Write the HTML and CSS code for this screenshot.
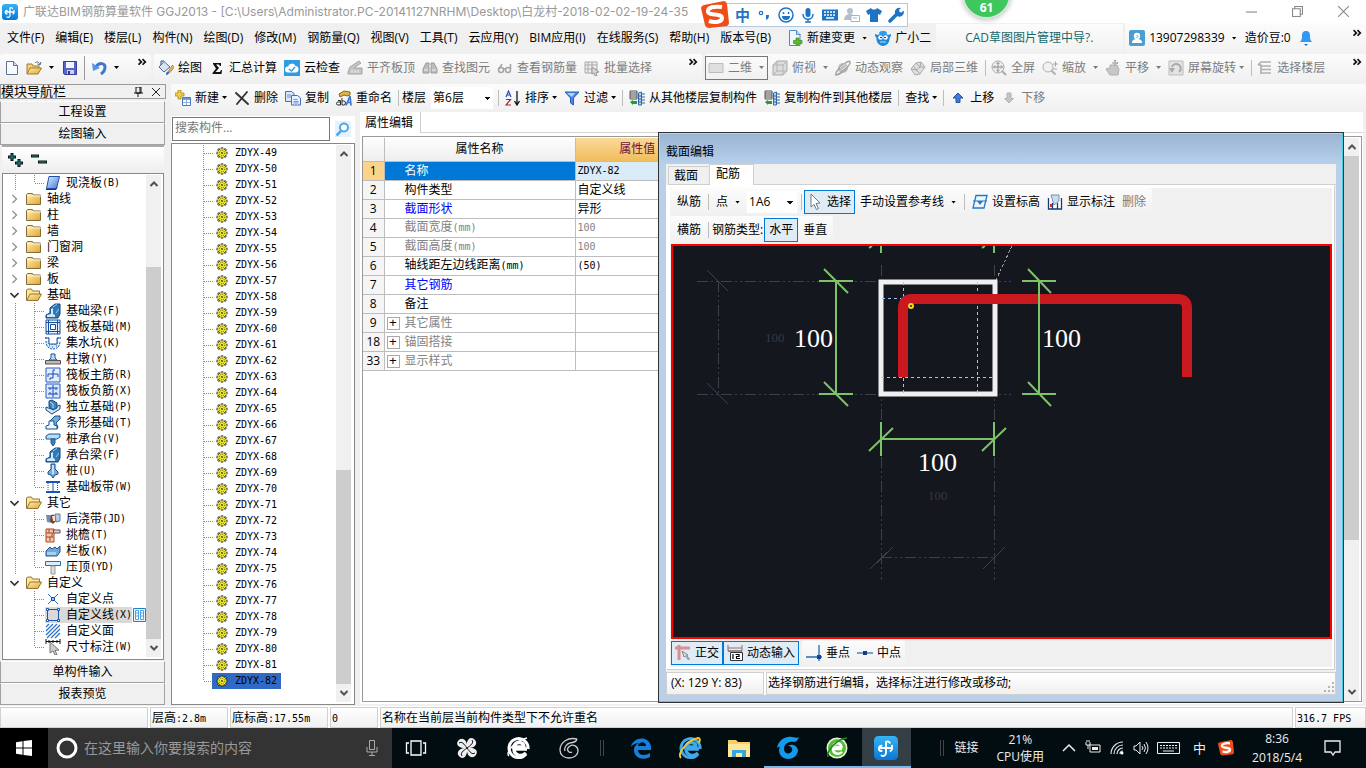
FILE: index.html
```html
<!DOCTYPE html>
<html lang="zh-CN">
<head>
<meta charset="utf-8">
<title>广联达BIM钢筋算量软件 GGJ2013</title>
<link rel="stylesheet" href="styles.css">
</head>
<body>
<svg class="defs" aria-hidden="true">
<defs>
<linearGradient id="gold" x1="0" y1="0" x2="1" y2="1"><stop offset="0" stop-color="#fff0b0"/><stop offset="1" stop-color="#e0a52c"/></linearGradient>
<linearGradient id="blue" x1="0" y1="0" x2="1" y2="1"><stop offset="0" stop-color="#e3eeff"/><stop offset="1" stop-color="#3b78d8"/></linearGradient>
<linearGradient id="sky" x1="0" y1="0" x2="0" y2="1"><stop offset="0" stop-color="#35b4f5"/><stop offset="1" stop-color="#0a78d6"/></linearGradient>
</defs>
<symbol id="logo" viewBox="0 0 16 16"><rect width="16" height="16" rx="3" fill="url(#sky)"/><path d="M10.500 4.500A1.600 1.600 0 0 0 8 4v7.500a2 2 0 0 1-3 1.500M12 8H4.500M5 6.500a1.500 1.500 0 0 0 0 3.500M12 6.500v2a2 2 0 0 1-1 1.500" fill="none" stroke="#fff" stroke-width="1.300" stroke-linecap="round"/></symbol>
<symbol id="new" viewBox="0 0 16 16"><path d="M2.500 1.500h7l4 4v9h-11z" fill="#f7fbff" stroke="#5b7590"/><path d="M9.500 1.500v4h4" fill="#cfe0f0" stroke="#5b7590"/></symbol>
<symbol id="open" viewBox="0 0 16 16"><path d="M1 14V4h5l1 2h6v3" fill="#f3d077" stroke="#a07a2c"/><path d="M1 14l3-6h11.500l-3.500 6z" fill="url(#gold)" stroke="#a07a2c"/><path d="M9 3c2-2 4-1 4.500 1M15 2l-1 3-2.500-1" fill="none" stroke="#456a8a"/></symbol>
<symbol id="save" viewBox="0 0 16 16"><path d="M1.500 1.500h13v13h-12l-1-1z" fill="#5764c8" stroke="#373f98"/><path d="M4 2h8v6H4z" fill="#f2f4ff"/><path d="M5 10h7v4H5z" fill="#c9cff0"/><path d="M6 11h2v3H6z" fill="#30378a"/></symbol>
<symbol id="undo" viewBox="0 0 16 16"><path d="M5 7c3-5 9-4 9 0 0 3-1 5-4 7" fill="none" stroke="#3f76cd" stroke-width="3"/><path d="M1 3l1 8 7-3z" fill="#5a92e4"/></symbol>
<symbol id="draw" viewBox="0 0 16 16"><path d="M6 1.500L12 7l-6 5-5-5z" fill="#d8e4f4" stroke="#496a92"/><path d="M3 5V1l3 0" stroke="#2d4f7a" fill="none"/><path d="M14.500 5l-4 6 1.500 1.500 4-5z" fill="#e4b64a" stroke="#8a6a24" stroke-width=".6"/><path d="M8 15c0-3 1-4 3-3.500 1 1.500-1 3.500-3 3.500z" fill="#3c6db4"/></symbol>
<symbol id="sigma" viewBox="0 0 16 16"><path d="M4 3h8v3h-1l-1-1.500H7L10 8l-3.500 4H11l1-2h1l-.5 4h-9v-1L7 8.500 4 4z" fill="#111"/></symbol>
<symbol id="cloud" viewBox="0 0 16 16"><rect width="16" height="16" fill="#2f9be0"/><path d="M4 12.500a3 3 0 0 1 0-6 4 4 0 0 1 7.500-.5 3.300 3.300 0 0 1 .5 6.500z" fill="#fff"/><path d="M5 9l2.500 2L11 7" fill="none" stroke="#2f9be0" stroke-width="1.400"/></symbol>
<symbol id="align" viewBox="0 0 16 16"><path d="M1 12l2-5 9-6 2 2-7 5h8v6H1z" fill="#c4c4c4" stroke="#a5a5a5"/><path d="M5 13v-3m3 3v-3m3 3v-3" stroke="#eee"/></symbol>
<symbol id="bino" viewBox="0 0 16 16"><path d="M2 7l2-4h3v10H1V9zM9 3h3l2 4 1 2v4H9z" fill="#bdbdbd" stroke="#9a9a9a"/><path d="M7 6h2M2 10h4M10 10h4" stroke="#eee"/></symbol>
<symbol id="glasses" viewBox="0 0 16 16"><g fill="none" stroke="#a4a4a4" stroke-width="1.500"><circle cx="4" cy="10" r="2.500"/><circle cx="11" cy="10" r="2.500"/><path d="M6 9h3M2 9l3-5M13.500 9V4"/></g></symbol>
<symbol id="batch" viewBox="0 0 16 16"><path d="M1 2h12v11H1zM1 5h12M1 9h12M4 2v11M8 2v11" fill="#eee" stroke="#a8a8a8"/><path d="M8 7l7 5-3 .5 1 3-2 .5-1-3-2 1z" fill="#d8d8d8" stroke="#999"/></symbol>
<symbol id="two" viewBox="0 0 16 16"><path d="M1 3.500h14v9H1z" fill="#dedede" stroke="#bdbdbd"/></symbol>
<symbol id="cube" viewBox="0 0 16 16"><path d="M1 5l4-4h10v10l-4 4H1z" fill="#dcdcdc" stroke="#a8a8a8"/><path d="M1 5h10v10M11 5l4-4M5 1v10h10M1 15l4-4" fill="none" stroke="#b5b5b5"/></symbol>
<symbol id="planet" viewBox="0 0 16 16"><circle cx="8" cy="8" r="5" fill="#bdbdbd"/><path d="M1 15C-1 12 14-2 15 2c1 2-8 12-14 13z" fill="none" stroke="#a2a2a2" stroke-width="1.500"/><path d="M5 8l5-4M7 10l5-4" stroke="#e8e8e8"/></symbol>
<symbol id="part" viewBox="0 0 16 16"><path d="M1 9l5-6 5-1 4 5-5 7-5 1z" fill="#e0e0e0" stroke="#aaa"/><path d="M1 9l5 1 4 4M6 3l4 4-4 3M11 2l-1 5 5 0M3 6l7 8" fill="none" stroke="#aaa"/></symbol>
<symbol id="full" viewBox="0 0 16 16"><circle cx="7" cy="7" r="6" fill="#eee" stroke="#aaa"/><path d="M11 11l4 4" stroke="#aaa" stroke-width="2"/><path d="M7 2.500v9M2.500 7h9M5.500 4L7 2.500 8.500 4M5.500 10L7 11.500 8.500 10M4 5.500L2.500 7 4 8.500M10 5.500L11.500 7 10 8.500" fill="none" stroke="#8e8e8e"/></symbol>
<symbol id="zoomi" viewBox="0 0 16 16"><circle cx="6" cy="7" r="5" fill="#f1f1f1" stroke="#b0b0b0"/><path d="M9.500 10.500l4 4" stroke="#b0b0b0" stroke-width="2"/><path d="M11 4h5M13.500 1.500v5M11 9h4" stroke="#a5a5a5"/></symbol>
<symbol id="hand" viewBox="0 0 16 16"><path d="M1 9l3-1 1 1V5h7l2 4-1 6H5z" fill="#c7c7c7" stroke="#b0b0b0"/><path d="M10 0v6M7 3h6M9 1l1-1 1 1M12 2l1 1-1 1" stroke="#999" fill="none"/></symbol>
<symbol id="rot" viewBox="0 0 16 16"><path d="M1 1h14v14H1z" fill="#e4e4e4" stroke="#bbb"/><path d="M4 7a4.500 4.500 0 1 1 7 5" fill="none" stroke="#a8a8a8" stroke-width="2"/><path d="M1 8h6l-3 5z" fill="#a8a8a8"/></symbol>
<symbol id="floors" viewBox="0 0 16 16"><path d="M1 5l3-3h10M4 6h10M4 9.500h10M4 13h10M1 5h3v9" fill="none" stroke="#b0b0b0" stroke-width="1.700"/></symbol>
<symbol id="chg" viewBox="0 0 16 16"><path d="M2.500.5h7l3.500 4v11H2.500z" fill="#eef7ff" stroke="#4d8cc4"/><path d="M9.500.5v4h4" fill="#b9d8f1" stroke="#4d8cc4"/><path d="M9 8h3v2.500h3v3h-3V16H9v-2.500H6.500v-3H9z" fill="#5eb82c" stroke="#3c8d18" stroke-width=".7"/></symbol>
<symbol id="owl" viewBox="0 0 16 16"><path d="M0 4l3 1a7 6 0 0 1 10 0l3-1c0 3-1 3-1.500 4A6.500 7 0 0 1 8 16 6.500 7 0 0 1 1.500 8C1 7 0 7 0 4z" fill="#1b88dc"/><path d="M4 3c1-3 7-3 8 0l-1 2H5z" fill="#2f9de8"/><circle cx="5.500" cy="7.500" r="2.300" fill="#fff"/><circle cx="10.500" cy="7.500" r="2.300" fill="#fff"/><circle cx="6" cy="7.500" r=".8"/><circle cx="10" cy="7.500" r=".8"/><path d="M5 12h6" stroke="#bfe2fa"/></symbol>
<symbol id="user" viewBox="0 0 16 16"><rect width="16" height="16" rx="2" fill="#4a9fd0"/><circle cx="8" cy="6" r="3.200" fill="#fff"/><path d="M3 13c0-3 2-4 5-4s5 1 5 4z" fill="#fff"/><path d="M7.500 5l1.500 1.500L7.500 8" stroke="#4a9fd0" fill="none"/></symbol>
<symbol id="bell" viewBox="0 0 16 16"><path d="M8 1c3.500 0 4 2.500 4 5 0 3 .5 4 2 6H2c1.500-2 2-3 2-6 0-2.500.5-5 4-5z" fill="#3298f4"/><path d="M6 14h4l-2 2z" fill="#1c6fc4"/></symbol>
<symbol id="add" viewBox="0 0 16 16"><path d="M3 0h3v3h3v3H6v3H3V6H0V3h3z" fill="#f0d040" stroke="#a27c16" stroke-width=".7"/><path d="M7.500 7.500h8v8h-8z" fill="#fff" stroke="#4a77bc"/><path d="M8 8h7v2H8z" fill="#6e9ede"/><path d="M8 12.500h7M11.500 10v5" stroke="#8fb0de"/></symbol>
<symbol id="del" viewBox="0 0 16 16"><path d="M2 3l12 11M13 2L3 14" stroke="#333" stroke-width="1.900" stroke-linecap="round"/></symbol>
<symbol id="copy" viewBox="0 0 16 16"><path d="M.5 1.500h6l2.500 2v8H.5z" fill="#dbe8fb" stroke="#3f6fbf"/><path d="M6.500 5.500h6l3 2.500v7h-9z" fill="#e8f1ff" stroke="#3f6fbf"/><path d="M2 5h4M2 7h4M8.500 9.500h4M8.500 11.500h5M8.500 13h5" stroke="#6c95d6"/></symbol>
<symbol id="rename" viewBox="0 0 16 16"><path d="M3 4l5-3 6 1v3l-3 1-3-1-4 2z" fill="#ddb445" stroke="#8a6520"/><path d="M2 10.500h2.500V15H2a1.500 1.500 0 0 1 0-3h2M6 8v7h1.500a2 2 0 0 0 0-4H6" fill="none" stroke="#2d2d2d"/><path d="M10 15.500l4-9.500 1 9.500M11 12.500h4" fill="none" stroke="#3e77d1" stroke-width="1.700"/></symbol>
<symbol id="sort" viewBox="0 0 16 16"><path d="M1 7l2.500-6L6 7M2 5h3" fill="none" stroke="#2b50b5" stroke-width="1.200"/><path d="M1 9.500h4.500L1 15h5" fill="none" stroke="#a5213b" stroke-width="1.200"/><path d="M12 1v13M9.500 11l2.500 4 2.500-4" fill="none" stroke="#111" stroke-width="1.300"/></symbol>
<symbol id="filter" viewBox="0 0 16 16"><path d="M1 2h14L9.500 8v7L6.500 13V8z" fill="#4a88df" stroke="#2b5fb1"/><path d="M3 3h8L8 7z" fill="#b8d4fa"/></symbol>
<symbol id="cpf" viewBox="0 0 16 16"><path d="M1 1h7v8H1zM1 3h7M1 5h7M1 7h7" fill="#f0f0f0" stroke="#555"/><path d="M1 12l3-2v1h4v3H4v1z" fill="#259a3d"/><path d="M9.500 3l3-1v13h-3zM12 4h4M12 7h4M12 10h4M12 13h4M10 6h3M10 9h3M10 12h3" fill="#bed4ec" stroke="#2f66a7"/></symbol>
<symbol id="up" viewBox="0 0 16 16"><path d="M8 3l5 5h-3v4.500H6V8H3z" fill="#4379da" stroke="#26549f"/></symbol>
<symbol id="down" viewBox="0 0 16 16"><path d="M8 13L3.500 8.500H6V3h4v5.500h2.500z" fill="#c4c4c4" stroke="#b4b4b4"/></symbol>
<symbol id="mag" viewBox="0 0 16 16"><rect width="16" height="16" fill="#e6f3fd"/><circle cx="9" cy="6.500" r="4" fill="#fff" stroke="#4fa7e6" stroke-width="2"/><path d="M6 10l-4.500 4.500" stroke="#4fa7e6" stroke-width="2.500"/></symbol>
<symbol id="folder" viewBox="0 0 16 16"><path d="M.5 13.500V3.500l1-1h5l1 1.500h7v9.500z" fill="url(#gold)" stroke="#876a3b"/><path d="M1 5h14" stroke="#fff6d2"/></symbol>
<symbol id="folderO" viewBox="0 0 16 16"><path d="M.5 13.500V3l1-1h4l1 2h7v3" fill="#fae69c" stroke="#967436"/><path d="M.8 13.500L4 7h11.500L12 13.500z" fill="url(#gold)" stroke="#967436"/></symbol>
<symbol id="slab" viewBox="0 0 16 16"><path d="M4 1.500h10.500l-3 12H1.500z" fill="url(#blue)" stroke="#1c4eae"/><path d="M1 14.500h10l1-2" stroke="#0c3691" fill="none"/></symbol>
<symbol id="beam" viewBox="0 0 16 16"><path d="M5 5l5-4h5v10l-2 4H1v-3l4-2z" fill="#2f79ba" stroke="#0e447a"/><path d="M2 14v-2l4-1V6l2-1v6l2 1v2z" fill="#d2eafd"/><path d="M8 4l4-3M11 10l3-4" stroke="#94c9ef"/></symbol>
<symbol id="raft" viewBox="0 0 16 16"><path d="M1 1h14v14H1zM3.500 1v14M12.500 1v14M1 3.500h14M1 12.500h14" fill="#e7f2ff" stroke="#134e9e"/><path d="M5.500 5.500h5v5h-5z" fill="#fff" stroke="#134e9e"/></symbol>
<symbol id="pit" viewBox="0 0 16 16"><path d="M0 3h4v6h8V3h4M1 6c0 6 3 8 7 8s7-2 7-8" fill="#d8eaff" stroke="#1c5da6" stroke-dasharray="2 1"/><path d="M4 3v6h8V3z" fill="#fff"/><path d="M0 3h4v6h8V3h4" fill="none" stroke="#1c5da6"/><path d="M4 11h1m2 1h1m3-1h1" stroke="#1c5da6"/></symbol>
<symbol id="pier" viewBox="0 0 16 16"><path d="M6 3h4v4l2 2H4l2-2z" fill="#c5dcf8" stroke="#1c4f9e"/><path d="M.5 9.500h15V13H.5z" fill="#bababa" stroke="#555"/></symbol>
<symbol id="bar" viewBox="0 0 16 16"><path d="M1 1h14v14H1z" fill="#e3edff" stroke="#2b5cc4"/><path d="M10 3H8v8H5v2M3 10V7h10v3" fill="none" stroke="#174aab"/></symbol>
<symbol id="bar2" viewBox="0 0 16 16"><path d="M1 1h14v14H1z" fill="#dce8ff" stroke="#2b5cc4"/><path d="M8 2v12M3 5h10M3 11h10M5 5v2M11 5v2M5 11V9M11 11V9" fill="none" stroke="#174aab"/></symbol>
<symbol id="foot" viewBox="0 0 16 16"><path d="M1 8l5 2 9-4v4l-8 5-6-4z" fill="#d3e8fb" stroke="#184a7b"/><path d="M4 2l3-1 5 3v5l-4 2-4-3z" fill="#3b82bd" stroke="#184a7b"/><path d="M5 3l3 2v4" stroke="#b9ddf7" fill="none"/></symbol>
<symbol id="strip" viewBox="0 0 16 16"><path d="M5 6l5-5h5v3l-4 4 2 4-1 2" fill="#77aadb" stroke="#14528f"/><path d="M1 14v-3l3-1V6h5v4l3 1v3z" fill="#eef7ff" stroke="#14528f"/></symbol>
<symbol id="cap" viewBox="0 0 16 16"><path d="M1 5l3-2h11v3l-3 2H1z" fill="#b7dcf6" stroke="#195693"/><path d="M6 8h4v4l-2 3-2-3z" fill="#3c82c0" stroke="#195693"/></symbol>
<symbol id="pile" viewBox="0 0 16 16"><path d="M6 1h4v5l3 3v2l-3 1-2 3-2-3-3-1V9l3-3z" fill="#77abd9" stroke="#145090"/><path d="M8 2v9" stroke="#e2f2ff" stroke-width="1.500"/></symbol>
<symbol id="band" viewBox="0 0 16 16"><path d="M1 3h14M1 13h14" stroke="#1557b0" stroke-width="2"/><path d="M3 4v8M12.500 4v8" stroke="#1557b0" stroke-dasharray="1 1"/><path d="M8 4v8" stroke="#1557b0"/></symbol>
<symbol id="pour" viewBox="0 0 16 16"><path d="M1 4h6v8l-5-1z" fill="#6f8eb5"/><path d="M6 4c3-1 5 0 5 6l-3 3-3-3z" fill="#7a3f1c"/><path d="M10 3h5v7l-4 1z" fill="#b5cbe8" stroke="#667ca0"/><path d="M7 5h3v5H8z" fill="#fbe3cf"/></symbol>
<symbol id="eave" viewBox="0 0 16 16"><path d="M1 2h8v13H1zM1 6h7M1 10h7M4 2v4M5 10v4M7 6v4" fill="#f3c9ad" stroke="#a74722"/><path d="M8 3h7v3H9z" fill="#d7d7d7" stroke="#744"/></symbol>
<symbol id="rail" viewBox="0 0 16 16"><path d="M1 8l4-4 2 2 3-2 2 2 3-3v6l-3 4H1z" fill="#6fa9dc" stroke="#205486"/><path d="M2 9h9v3H2z" fill="#a7cff1"/></symbol>
<symbol id="coping" viewBox="0 0 16 16"><path d="M.5 2.500h15v4H.5z" fill="#d6edff" stroke="#1972c7"/><path d="M6 7h4v8H6z" fill="#ddd" stroke="#999"/></symbol>
<symbol id="cpt" viewBox="0 0 16 16"><path d="M3 3l10 10M13 3L3 13" stroke="#2d71ca"/><path d="M6.500 6.500h3v3h-3z" fill="#9ec7f6" stroke="#124a9e"/></symbol>
<symbol id="cline" viewBox="0 0 16 16"><path d="M2.500 2.500h11v11h-11z" fill="none" stroke="#1957b3"/><g fill="#fff" stroke="#1957b3"><path d="M1.500 1.500h2v2h-2zM12.500 1.500h2v2h-2zM1.500 12.500h2v2h-2zM12.500 12.500h2v2h-2z"/></g></symbol>
<symbol id="cface" viewBox="0 0 16 16"><path d="M1 4l3-3M1 8l7-7M1 12L12 1M2 15L15 2M6 15l9-9M10 15l5-5" stroke="#2c70c6" stroke-width="1.200"/></symbol>
<symbol id="dim" viewBox="0 0 16 16"><path d="M1 0v5M15 0v5M1 2.500h14M4 1v3M8 1v3M12 1v3" stroke="#111"/><path d="M5 3l9 8-4 .5 2 4-2 .5-2-4-3 2z" fill="#ccc" stroke="#777"/></symbol>
<symbol id="win2" viewBox="0 0 13 14"><path d="M.5.5h12v13H.5z" fill="#e9f6ff" stroke="#1b83cc"/><path d="M2.500 2.500h3v9h-3zM7.500 2.500h3v9h-3zM2 5h3.500M7.500 5H11M2 8h3.500M7.500 8H11" fill="#fff" stroke="#4ba3e0"/></symbol>
<symbol id="gear" viewBox="0 0 12 12"><g stroke="#222" stroke-width="2.600"><path d="M6 .5v11M.5 6h11M2 2l8 8M10 2l-8 8"/></g><circle cx="6" cy="6" r="4" fill="#f0ea28"/><g stroke="#f0ea28" stroke-width="1"><path d="M6 1v10M1 6h10M2.400 2.400l7.200 7.200M9.600 2.400L2.400 9.600"/></g><circle cx="6" cy="6" r="2.700" fill="none" stroke="#4a4610" stroke-width=".8" stroke-dasharray="1.100 1"/><path d="M5.200 5.200h1.600v1.600H5.200z" fill="#222"/></symbol>
<symbol id="chevR" viewBox="0 0 8 10"><path d="M2 1l4 4-4 4" fill="none" stroke="#999" stroke-width="1.500"/></symbol>
<symbol id="chevD" viewBox="0 0 8 10"><path d="M0 3l4 4 4-4" fill="none" stroke="#333" stroke-width="1.600"/></symbol>
<symbol id="sUp" viewBox="0 0 10 8"><path d="M1.500 6L5 2.500 8.500 6" fill="none" stroke="#505050" stroke-width="2"/></symbol>
<symbol id="sDn" viewBox="0 0 10 8"><path d="M1.500 2L5 5.500 8.500 2" fill="none" stroke="#505050" stroke-width="2"/></symbol>
<symbol id="more" viewBox="0 0 8 8"><path d="M.5 1l2.500 2.500L.5 6M4 1l2.500 2.500L4 6" fill="none" stroke="#111" stroke-width="1.500"/></symbol>
<symbol id="cur" viewBox="0 0 16 16"><path d="M3 0l9 9-4 .5 2.500 5-2 1L6 10.500 3 13z" fill="#fff" stroke="#777"/></symbol>
<symbol id="elev" viewBox="0 0 16 16"><path d="M4 1.500h11L12 14H1z" fill="#eef6ff" stroke="#2577c7" stroke-width="1.300"/><path d="M1 7h14" stroke="#2577c7"/><path d="M5 7h6l-3 4z" fill="#2577c7"/></symbol>
<symbol id="showd" viewBox="0 0 16 16"><path d="M1.500 4v11h13V4M5.500 9v6M10.500 9v6" fill="#fff" stroke="#153e78" stroke-width="1.300"/><path d="M4 1h8v6l-5 4z" fill="#c9dcf2" stroke="#7c8ea5"/><path d="M3 10h2v3H3z" fill="#d83420"/></symbol>
<symbol id="ortho" viewBox="0 0 16 16"><path d="M0 3h15M4 0v15" stroke="#dc8f92" stroke-width="3"/><path d="M7 6l6 4-1.500.5 3 3.500-1 1-3-4L9 12z" fill="#ddd" stroke="#888"/></symbol>
<symbol id="dyn" viewBox="0 0 16 16"><path d="M1 3h14M1 0v6M15 0v6" stroke="#a66"/><path d="M1 6h14" stroke="#333"/><path d="M3.500 7.500h12v8h-12z" fill="#fff" stroke="#333"/><path d="M6 9v5M8.500 9.500H12v2H9.500v2H13" fill="none" stroke="#000" stroke-width="1.200"/></symbol>
<symbol id="perp" viewBox="0 0 16 16"><path d="M0 12h16M13 0v16" stroke="#2a69b4" stroke-width="1.300"/><path d="M11 10h4v4h-4z" fill="#104595"/></symbol>
<symbol id="midp" viewBox="0 0 16 16"><path d="M0 8h16" stroke="#5381bd" stroke-width="1.500"/><path d="M6 6h4v4H6z" fill="#163b87"/></symbol>
<symbol id="sogou" viewBox="0 0 28 28"><path d="M3 4l20-4q2 0 3 3l2 19q0 2-2 3l-18 2q-3 0-4-3L0 7q0-2 3-3z" fill="#f04e18"/><path d="M21 6c-7-1-15 0-14 5 1 4 14 1 14 6 0 4-7 5-13 3" fill="none" stroke="#fff" stroke-width="4"/></symbol>
<symbol id="spiral" viewBox="0 0 24 24"><path d="M23 1C20 3 17 0 12 1 6 2 2 6 1 12c3-3 3 0 2 2 0 5 4 9 9 9s9-3 10-8c0-5-6-8-10-5 3 0 5 2 4 5-2 4-8 3-8-2 0-6 6-8 10-7 3 0 4-3 5-5z" fill="currentColor"/></symbol>
<symbol id="ie" viewBox="0 0 24 24"><path d="M21 13H8c0 7 8 8 12 4M8 11c1-6 10-6 10 0z" fill="none" stroke="currentColor" stroke-width="3.500"/><path d="M20 18A9.500 9.500 0 1 1 22 13" fill="none" stroke="currentColor" stroke-width="3"/></symbol>
</svg>

<header class="titlebar">
  <svg class="i"><use href="#logo"/></svg>
  <h1>广联达BIM钢筋算量软件 GGJ2013 - [C:\Users\Administrator.PC-20141127NRHM\Desktop\白龙村-2018-02-02-19-24-35</h1>
  <div class="winctl">
    <button aria-label="最小化"><svg viewBox="0 0 10 10"><path d="M0 5.500h10"/></svg></button>
    <button aria-label="还原"><svg viewBox="0 0 10 10"><path d="M.5 2.500h7v7h-7zM2.500 2.500v-2h7v7h-2"/></svg></button>
    <button aria-label="关闭"><svg viewBox="0 0 10 10"><path d="M0 0l10 10M10 0L0 10"/></svg></button>
  </div>
</header>

<div class="ime">
  <svg class="s"><use href="#sogou"/></svg>
  <b>中</b>
  <svg class="i" viewBox="0 0 16 16"><circle cx="5" cy="6" r="1.700" fill="none" stroke="#1f73c4" stroke-width="1.200"/><path d="M10 8h3c0 3-1 4-3 5z" fill="#1f73c4"/></svg>
  <svg class="i" viewBox="0 0 16 16"><circle cx="8" cy="8" r="7" fill="none" stroke="#1f73c4" stroke-width="1.500"/><path d="M4 9a4 4 0 0 0 8 0z" fill="#1f73c4"/><path d="M5.500 5v2M10.500 5v2" stroke="#1f73c4" stroke-width="1.500"/></svg>
  <svg class="i" viewBox="0 0 16 16"><rect x="5.500" y="1" width="5" height="9" rx="2.500" fill="#1f73c4"/><path d="M3 7c0 7 10 7 10 0M8 12v3M5 15h6" fill="none" stroke="#1f73c4" stroke-width="1.500"/></svg>
  <svg class="i" viewBox="0 0 16 16"><rect y="2.500" width="16" height="11" fill="#1f73c4"/><path d="M2 5h12M2 8h12" stroke="#fff" stroke-width="1.500" stroke-dasharray="2 1"/><path d="M4 11h8" stroke="#fff" stroke-width="1.500"/></svg>
  <svg class="i" viewBox="0 0 16 16"><circle cx="6" cy="4" r="3" fill="#b5bfce"/><path d="M0 13c0-7 9-7 10-4v4z" fill="#b5bfce"/><path d="M7 8.500h8.500v6H7zM9 11h4" fill="#fff" stroke="#a4b3c8"/></svg>
  <svg class="i" viewBox="0 0 16 16"><path d="M5 1c1 2 5 2 6 0l5 3-2 4-2-1v8H4V7L2 8 0 4z" fill="#1f73c4"/></svg>
  <svg class="i" viewBox="0 0 16 16"><path d="M2 14l7-7" stroke="#1f73c4" stroke-width="3.500" stroke-linecap="round"/><path d="M13 1l-2 2 .5 2 2 .5 2-2A4.500 4.500 0 1 1 13 1z" fill="#1f73c4"/></svg>
</div>
<div class="ball"><span>61</span></div>

<nav class="menubar">
  <div class="menus">
    <a href="#">文件(F)</a><a href="#">编辑(E)</a><a href="#">楼层(L)</a><a href="#">构件(N)</a><a href="#">绘图(D)</a><a href="#">修改(M)</a><a href="#">钢筋量(Q)</a><a href="#">视图(V)</a><a href="#">工具(T)</a><a href="#">云应用(Y)</a><a href="#">BIM应用(I)</a><a href="#">在线服务(S)</a><a href="#">帮助(H)</a><a href="#">版本号(B)</a>
  </div>
  <button class="tb chg"><svg class="i"><use href="#chg"/></svg>新建变更<i class="dd wide"></i></button>
  <button class="tb"><svg class="i"><use href="#owl"/></svg>广小二</button>
  <a class="notice" href="#">CAD草图图片管理中导?.</a>
  <div class="account">
    <button class="tb"><svg class="i"><use href="#user"/></svg>13907298339<i class="dd wide"></i></button>
    <span>造价豆:0</span>
    <svg class="i"><use href="#bell"/></svg>
    <svg class="more"><use href="#more"/></svg>
  </div>
</nav>

<div class="bars">
  <div class="bar files">
    <button class="tb" aria-label="新建"><svg class="i"><use href="#new"/></svg></button>
    <button class="tb" aria-label="打开"><svg class="i"><use href="#open"/></svg><i class="dd wide"></i></button>
    <button class="tb" aria-label="保存"><svg class="i"><use href="#save"/></svg></button>
    <i class="sep dark"></i>
    <button class="tb" aria-label="撤销"><svg class="i"><use href="#undo"/></svg><i class="dd wide"></i></button>
    <svg class="more"><use href="#more"/></svg>
  </div>
  <div class="bar tools">
    <button class="tb"><svg class="i"><use href="#draw"/></svg>绘图</button>
    <button class="tb"><svg class="i"><use href="#sigma"/></svg>汇总计算</button>
    <button class="tb"><svg class="i"><use href="#cloud"/></svg>云检查</button>
    <button class="tb" disabled><svg class="i"><use href="#align"/></svg>平齐板顶</button>
    <button class="tb" disabled><svg class="i"><use href="#bino"/></svg>查找图元</button>
    <button class="tb" disabled><svg class="i"><use href="#glasses"/></svg>查看钢筋量</button>
    <button class="tb" disabled><svg class="i"><use href="#batch"/></svg>批量选择</button>
    <svg class="more"><use href="#more"/></svg>
  </div>
  <div class="bar view">
    <button class="tb boxed" disabled><svg class="i"><use href="#two"/></svg>二维<i class="dd wide"></i></button>
    <button class="tb" disabled><svg class="i"><use href="#cube"/></svg>俯视<i class="dd wide"></i></button>
    <button class="tb" disabled><svg class="i"><use href="#planet"/></svg>动态观察</button>
    <button class="tb" disabled><svg class="i"><use href="#part"/></svg>局部三维</button>
    <i class="sep"></i>
    <button class="tb" disabled><svg class="i"><use href="#full"/></svg>全屏</button>
    <button class="tb" disabled><svg class="i"><use href="#zoomi"/></svg>缩放<i class="dd wide"></i></button>
    <button class="tb" disabled><svg class="i"><use href="#hand"/></svg>平移<i class="dd wide"></i></button>
    <button class="tb" disabled><svg class="i"><use href="#rot"/></svg>屏幕旋转<i class="dd"></i></button>
    <i class="sep"></i>
    <button class="tb" disabled><svg class="i"><use href="#floors"/></svg>选择楼层</button>
    <svg class="more"><use href="#more"/></svg>
  </div>
</div>

<main class="work">
  <aside class="nav">
    <div class="navhead"><span>模块导航栏</span>
      <svg viewBox="0 0 10 10"><path d="M3 0h5v6H3zM1 6h9M5 6v4M7 0v6" fill="none" stroke="#111"/></svg>
      <svg viewBox="0 0 10 10"><path d="M1 1l8 8M9 1L1 9" stroke="#222"/></svg></div>
    <button class="navbtn">工程设置</button>
    <button class="navbtn">绘图输入</button>
    <div class="expand">
      <svg width="18" height="14" viewBox="0 0 18 14"><path d="M0 4h8M4 0v8M7 10h8M11 6v8" stroke="#111" stroke-width="3"/><path d="M1 4h6M4 1v6M8 10h6M11 7v6" stroke="#08928c"/></svg>
      <svg width="18" height="14" viewBox="0 0 18 14"><path d="M0 3h8M7 9h9" stroke="#111" stroke-width="3"/><path d="M1 3h6M8 9h7" stroke="#08928c"/></svg>
    </div>
    <div class="treebox">
      <ul class="tree">
        <li class="leaf last"><svg class="i"><use href="#slab"/></svg>现浇板<s>(B)</s></li>
        <li class="grp"><svg class="ch"><use href="#chevR"/></svg><svg class="i"><use href="#folder"/></svg>轴线</li>
        <li class="grp"><svg class="ch"><use href="#chevR"/></svg><svg class="i"><use href="#folder"/></svg>柱</li>
        <li class="grp"><svg class="ch"><use href="#chevR"/></svg><svg class="i"><use href="#folder"/></svg>墙</li>
        <li class="grp"><svg class="ch"><use href="#chevR"/></svg><svg class="i"><use href="#folder"/></svg>门窗洞</li>
        <li class="grp"><svg class="ch"><use href="#chevR"/></svg><svg class="i"><use href="#folder"/></svg>梁</li>
        <li class="grp"><svg class="ch"><use href="#chevR"/></svg><svg class="i"><use href="#folder"/></svg>板</li>
        <li class="grp"><svg class="ch"><use href="#chevD"/></svg><svg class="i"><use href="#folderO"/></svg>基础</li>
        <li class="leaf"><svg class="i"><use href="#beam"/></svg>基础梁<s>(F)</s></li>
        <li class="leaf"><svg class="i"><use href="#raft"/></svg>筏板基础<s>(M)</s></li>
        <li class="leaf"><svg class="i"><use href="#pit"/></svg>集水坑<s>(K)</s></li>
        <li class="leaf"><svg class="i"><use href="#pier"/></svg>柱墩<s>(Y)</s></li>
        <li class="leaf"><svg class="i"><use href="#bar"/></svg>筏板主筋<s>(R)</s></li>
        <li class="leaf"><svg class="i"><use href="#bar2"/></svg>筏板负筋<s>(X)</s></li>
        <li class="leaf"><svg class="i"><use href="#foot"/></svg>独立基础<s>(P)</s></li>
        <li class="leaf"><svg class="i"><use href="#strip"/></svg>条形基础<s>(T)</s></li>
        <li class="leaf"><svg class="i"><use href="#cap"/></svg>桩承台<s>(V)</s></li>
        <li class="leaf"><svg class="i"><use href="#beam"/></svg>承台梁<s>(F)</s></li>
        <li class="leaf"><svg class="i"><use href="#pile"/></svg>桩<s>(U)</s></li>
        <li class="leaf last"><svg class="i"><use href="#band"/></svg>基础板带<s>(W)</s></li>
        <li class="grp"><svg class="ch"><use href="#chevD"/></svg><svg class="i"><use href="#folderO"/></svg>其它</li>
        <li class="leaf"><svg class="i"><use href="#pour"/></svg>后浇带<s>(JD)</s></li>
        <li class="leaf"><svg class="i"><use href="#eave"/></svg>挑檐<s>(T)</s></li>
        <li class="leaf"><svg class="i"><use href="#rail"/></svg>栏板<s>(K)</s></li>
        <li class="leaf last"><svg class="i"><use href="#coping"/></svg>压顶<s>(YD)</s></li>
        <li class="grp"><svg class="ch"><use href="#chevD"/></svg><svg class="i"><use href="#folderO"/></svg>自定义</li>
        <li class="leaf end"><svg class="i"><use href="#cpt"/></svg>自定义点</li>
        <li class="leaf end"><span class="hot"><svg class="i"><use href="#cline"/></svg>自定义线<s>(X)</s></span><svg class="w2"><use href="#win2"/></svg></li>
        <li class="leaf end"><svg class="i"><use href="#cface"/></svg>自定义面</li>
        <li class="leaf end last"><svg class="i"><use href="#dim"/></svg>尺寸标注<s>(W)</s></li>
      </ul>
      <div class="scroll t1"><svg><use href="#sUp"/></svg><i></i><b></b><svg><use href="#sDn"/></svg></div>
    </div>
    <button class="navbtn">单构件输入</button>
    <button class="navbtn">报表预览</button>
  </aside>

  <div class="right">
    <div class="bar edit">
      <button class="tb"><svg class="i"><use href="#add"/></svg>新建<i class="dd"></i></button>
      <button class="tb"><svg class="i"><use href="#del"/></svg>删除</button>
      <button class="tb"><svg class="i"><use href="#copy"/></svg>复制</button>
      <button class="tb"><svg class="i"><use href="#rename"/></svg>重命名</button>
      <i class="sep"></i>
      <label class="field" for="floor">楼层</label>
      <select id="floor" class="combo"><option>第6层</option></select>
      <i class="sep"></i>
      <button class="tb"><svg class="i"><use href="#sort"/></svg>排序<i class="dd"></i></button>
      <button class="tb"><svg class="i"><use href="#filter"/></svg>过滤<i class="dd"></i></button>
      <i class="sep"></i>
      <button class="tb"><svg class="i"><use href="#cpf"/></svg>从其他楼层复制构件</button>
      <button class="tb"><svg class="i"><use href="#cpf"/></svg>复制构件到其他楼层</button>
      <i class="sep"></i>
      <button class="tb">查找<i class="dd"></i></button>
      <i class="sep"></i>
      <button class="tb"><svg class="i"><use href="#up"/></svg>上移</button>
      <button class="tb" disabled><svg class="i"><use href="#down"/></svg>下移</button>
    </div>
    <div class="panes">
      <section class="parts">
        <form class="search"><input type="text" placeholder="搜索构件..." aria-label="搜索构件"><button type="button" aria-label="搜索"><svg class="i"><use href="#mag"/></svg></button></form>
        <div class="listbox">
          <ul class="list">
            <li><svg><use href="#gear"/></svg>ZDYX-49</li>
            <li><svg><use href="#gear"/></svg>ZDYX-50</li>
            <li><svg><use href="#gear"/></svg>ZDYX-51</li>
            <li><svg><use href="#gear"/></svg>ZDYX-52</li>
            <li><svg><use href="#gear"/></svg>ZDYX-53</li>
            <li><svg><use href="#gear"/></svg>ZDYX-54</li>
            <li><svg><use href="#gear"/></svg>ZDYX-55</li>
            <li><svg><use href="#gear"/></svg>ZDYX-56</li>
            <li><svg><use href="#gear"/></svg>ZDYX-57</li>
            <li><svg><use href="#gear"/></svg>ZDYX-58</li>
            <li><svg><use href="#gear"/></svg>ZDYX-59</li>
            <li><svg><use href="#gear"/></svg>ZDYX-60</li>
            <li><svg><use href="#gear"/></svg>ZDYX-61</li>
            <li><svg><use href="#gear"/></svg>ZDYX-62</li>
            <li><svg><use href="#gear"/></svg>ZDYX-63</li>
            <li><svg><use href="#gear"/></svg>ZDYX-64</li>
            <li><svg><use href="#gear"/></svg>ZDYX-65</li>
            <li><svg><use href="#gear"/></svg>ZDYX-66</li>
            <li><svg><use href="#gear"/></svg>ZDYX-67</li>
            <li><svg><use href="#gear"/></svg>ZDYX-68</li>
            <li><svg><use href="#gear"/></svg>ZDYX-69</li>
            <li><svg><use href="#gear"/></svg>ZDYX-70</li>
            <li><svg><use href="#gear"/></svg>ZDYX-71</li>
            <li><svg><use href="#gear"/></svg>ZDYX-72</li>
            <li><svg><use href="#gear"/></svg>ZDYX-73</li>
            <li><svg><use href="#gear"/></svg>ZDYX-74</li>
            <li><svg><use href="#gear"/></svg>ZDYX-75</li>
            <li><svg><use href="#gear"/></svg>ZDYX-76</li>
            <li><svg><use href="#gear"/></svg>ZDYX-77</li>
            <li><svg><use href="#gear"/></svg>ZDYX-78</li>
            <li><svg><use href="#gear"/></svg>ZDYX-79</li>
            <li><svg><use href="#gear"/></svg>ZDYX-80</li>
            <li><svg><use href="#gear"/></svg>ZDYX-81</li>
            <li class="sel"><span><svg><use href="#gear"/></svg>ZDYX-82</span></li>
          </ul>
          <div class="scroll t2"><svg><use href="#sUp"/></svg><i></i><b></b><svg><use href="#sDn"/></svg></div>
        </div>
      </section>

      <section class="props">
        <div class="ptabs"><button>属性编辑</button></div>
        <div class="pbox">
          <div class="pt">
          <table>
            <thead><tr><th class="n"></th><th class="k">属性名称</th><th class="v">属性值</th></tr></thead>
            <tbody>
              <tr class="cur"><th>1</th><td>名称</td><td><s>ZDYX-82</s></td></tr>
              <tr><th>2</th><td>构件类型</td><td>自定义线</td></tr>
              <tr class="link"><th>3</th><td>截面形状</td><td>异形</td></tr>
              <tr class="off"><th>4</th><td>截面宽度<s>(mm)</s></td><td><s>100</s></td></tr>
              <tr class="off"><th>5</th><td>截面高度<s>(mm)</s></td><td><s>100</s></td></tr>
              <tr><th>6</th><td>轴线距左边线距离<s>(mm)</s></td><td><s>(50)</s></td></tr>
              <tr class="link"><th>7</th><td>其它钢筋</td><td></td></tr>
              <tr><th>8</th><td>备注</td><td></td></tr>
              <tr class="off fold"><th>9</th><td><button aria-label="展开">+</button>其它属性</td><td></td></tr>
              <tr class="off fold"><th>18</th><td><button aria-label="展开">+</button>锚固搭接</td><td></td></tr>
              <tr class="off fold"><th>33</th><td><button aria-label="展开">+</button>显示样式</td><td></td></tr>
            </tbody>
          </table>
          </div>
          <div class="scroll t3"><svg><use href="#sUp"/></svg><b></b><i></i><svg><use href="#sDn"/></svg></div>
        </div>
      </section>
    </div>
  </div>
</main>

<section class="dialog" role="dialog" aria-label="截面编辑">
  <h2>截面编辑</h2>
  <div class="dbody">
    <div class="dtabs"><button>截面</button><button class="on">配筋</button><i></i></div>
    <div class="pane">
      <div class="drow one">
        <div class="bar">
          <button class="tb">纵筋</button><i class="sep"></i>
          <button class="tb">点<i class="dd wide"></i></button>
          <select class="combo steel" aria-label="钢筋"><option>1A6</option></select>
          <i class="sep"></i>
          <button class="tb on"><svg class="i"><use href="#cur"/></svg>选择</button>
          <button class="tb">手动设置参考线<i class="dd wide"></i></button>
          <i class="sep"></i>
          <button class="tb"><svg class="i"><use href="#elev"/></svg>设置标高</button>
          <button class="tb"><svg class="i"><use href="#showd"/></svg>显示标注</button>
          <button class="tb" disabled>删除</button>
        </div>
      </div>
      <div class="drow two">
        <div class="bar">
          <button class="tb">横筋</button><i class="sep"></i>
          <span class="field">钢筋类型:</span>
          <button class="tb on">水平</button>
          <button class="tb">垂直</button>
        </div>
      </div>
      <div class="canvas">
        <svg>
          <g class="grid">
            <path d="M24 35h314M24 148h314M45 35v113M208 19v315M321 19v315M208 311h113"/>
            <path d="M34 24l21 21M34 137l21 21M197 323l23-22M310 323l22-22" class="tick"/>
            <path d="M339 0l-17 36" class="lead"/>
          </g>
          <g class="dimt"><text x="92" y="96">100</text><text x="255" y="254">100</text></g>
          <path d="M208 36h114v112H208z" class="box"/>
          <path d="M230 36v112M304 36v112M209 52h21M208 131h113" class="ref"/>
          <path d="M230 131V62q0-9 9-9h266q9 0 9 9v69" class="rebar"/>
          <circle cx="238" cy="60" r="2" class="node"/>
          <g class="dims">
            <path d="M163 35v113M146 35h34M146 148h34M151 23l24 24M151 136l24 24"/>
            <path d="M366 35v113M349 35h34M349 148h34M355 23l23 24M355 136l23 24"/>
            <path d="M208 193h113M208 176v34M321 176v34M196 205l24-23M309 205l24-23M208 0v7M321 0v7M196 2l3-2M309 2l3-2"/>
          </g>
          <g class="num"><text x="121" y="101">100</text><text x="369" y="101">100</text><text x="245" y="225">100</text></g>
        </svg>
      </div>
      <div class="snap">
        <div class="pair">
          <button class="tb on"><svg class="i"><use href="#ortho"/></svg>正交</button>
          <button class="tb on"><svg class="i"><use href="#dyn"/></svg>动态输入</button>
        </div>
        <div class="bar">
          <button class="tb"><svg class="i"><use href="#perp"/></svg>垂点</button>
          <button class="tb"><svg class="i"><use href="#midp"/></svg>中点</button>
        </div>
      </div>
    </div>
    <div class="dstat"><span class="xy">(X: 129 Y: 83)</span><span class="msg">选择钢筋进行编辑，选择标注进行修改或移动;<svg viewBox="0 0 12 12"><path d="M10 2h2v2h-2zM6 6h2v2H6zM10 6h2v2h-2zM2 10h2v2H2zM6 10h2v2H6zM10 10h2v2h-2z" fill="#b5b5b5"/></svg></span></div>
  </div>
</section>

<footer class="status">
  <span class="c1"></span><span class="c2">层高<s>:2.8m</s></span><span class="c3">底标高<s>:17.55m</s></span><span class="c4"><s>0</s></span><span class="c5">名称在当前层当前构件类型下不允许重名</span><span class="c6"><s>316.7 FPS</s></span>
</footer>

<div class="taskbar">
  <button class="start" aria-label="开始"><svg viewBox="0 0 16 16"><path d="M0 2.300L6.500 1.300V7.500H0zM7.500 1.100L16 0v7.500H7.500zM0 8.500h6.500v6.200L0 13.700zM7.500 8.500H16V16l-8.500-1.100z" fill="#fff"/></svg></button>
  <label class="find"><svg class="ring" viewBox="0 0 22 22"><circle cx="11" cy="11" r="9" fill="none" stroke="#fff" stroke-width="3"/></svg><input type="text" placeholder="在这里输入你要搜索的内容"><svg class="mic" viewBox="0 0 12 18"><path d="M3.500 1.500h5v9h-5zM1 8v5h10V8M6 13v4M3 16.500h6" fill="none" stroke="#aaa"/></svg></label>
  <div class="apps">
    <button aria-label="任务视图"><svg viewBox="0 0 24 24"><path d="M7 5h10v14H7zM5 7H2.500v10H5M19 7h2.500v10H19" fill="none" stroke="#fff" stroke-width="1.300"/></svg></button>
    <button aria-label="花瓣"><svg viewBox="0 0 24 24"><g fill="#eee"><path d="M12 12C5 13 0 9 3 5c4-5 10-1 9 7zM12 12c-1-7 2-12 7-9 5 4 1 10-7 9zM12 12c7-1 12 2 9 7-4 5-10 1-9-7zM12 12c1 7-3 12-7 9-5-4-1-10 7-9z"/></g><path d="M4 7c3-2 5 1 8 5M17 4c2 3-1 5-5 8M20 17c-3 2-5-1-8-5M7 20c-2-3 1-5 5-8" fill="none" stroke="#111"/></svg></button>
    <button aria-label="浏览器" class="white"><svg viewBox="0 0 24 24"><use href="#ie"/><path d="M3 20C-1 17 8 5 21 2" fill="none" stroke="#fff" stroke-width="1.500"/></svg></button>
    <button aria-label="旋风"><svg viewBox="0 0 24 24"><path d="M20 3C11 1 3 6 3 14c0 5 4 8 9 8s9-3 9-7c0-5-5-7-8-5-5 3-1 8 2 6M20 3c-1 4-4 3-7 4-4 1-6 5-5 8" fill="none" stroke="#ccc" stroke-width="1.300"/></svg></button>
    <i class="bars2"></i>
    <button aria-label="Edge" class="edge"><svg viewBox="0 0 24 24"><path d="M2 11C4 1 19-1 22 10v4H9c0 6 8 6 12 3v4C14 25 5 22 5 14c0-4 3-6 5-7-3 0-6 1-8 4zm7-1h8c0-5-7-5-8 0z" fill="#1580dc"/></svg></button>
    <button aria-label="Internet Explorer" class="iex"><svg viewBox="0 0 24 24"><use href="#ie"/><path d="M3 22C-1 18 9 4 20 2q3 0 1 5" fill="none" stroke="#f3c62f" stroke-width="2"/></svg></button>
    <button aria-label="文件资源管理器"><svg viewBox="0 0 24 24"><path d="M1 4h8l2 2h12v15H1z" fill="#f6cf65"/><path d="M1 8h22v13H1z" fill="#ffe79a"/><path d="M5 21v-7h14v7h-4v-4H9v4z" fill="#35a6de"/></svg></button>
    <button aria-label="广联达" class="run cyan"><svg><use href="#spiral"/></svg></button>
    <button aria-label="360浏览器" class="run"><svg viewBox="0 0 24 24"><circle cx="12" cy="12" r="10.500" fill="#e7f8df"/><circle cx="12" cy="12" r="9" fill="#58bd32"/><path d="M17 13H8c0 5 6 6 9 3M8 11c1-5 8-5 8.500 0z" fill="none" stroke="#fff" stroke-width="2.400"/><path d="M3 21C1 15 12 3 22 2" fill="none" stroke="#218725" stroke-width="1.500"/></svg></button>
    <button aria-label="钢筋算量" class="run act"><svg><use href="#logo"/></svg></button>
  </div>
  <div class="tray">
    <i class="bars2"></i>
    <span>链接</span>
    <span class="cpu">21%<br>CPU使用</span>
    <svg class="i" viewBox="0 0 16 16"><path d="M2 11l6-6 6 6" fill="none" stroke="#eee" stroke-width="1.500"/></svg>
    <svg class="i" viewBox="0 0 16 16"><path d="M5 5h10v7H5z" fill="#000" stroke="#eee"/><path d="M7 7h6v3H7z" fill="#eee"/><path d="M1 2v3h4V2M3 5v4M2 0v2M4 0v2" stroke="#eee" fill="none"/></svg>
    <svg class="i" viewBox="0 0 16 16"><path d="M2 14A12 12 0 0 1 14 2M5 14a9 9 0 0 1 9-9M8 14a6 6 0 0 1 6-6M11 14a3 3 0 0 1 3-3" fill="none" stroke="#ddd" stroke-width="1.200"/><circle cx="13" cy="13" r="1.500" fill="#fff"/></svg>
    <svg class="i" viewBox="0 0 16 16"><path d="M1 6h2l4-4v12L3 10H1zM9 6q2 2 0 4M11 4q3 4 0 8M13 2q4 6 0 12" fill="none" stroke="#eee"/></svg>
    <svg class="kb" viewBox="0 0 24 16"><path d="M.5 2.500h22v11H.5z" fill="none" stroke="#eee"/><path d="M3 5.500h17M3 8h17" stroke="#eee" stroke-dasharray="2 1"/><path d="M6 11h11" stroke="#eee"/></svg>
    <span class="zh">中</span>
    <svg class="i" viewBox="0 0 28 28"><use href="#sogou"/></svg>
    <span class="clock">8:36<br>2018/5/4</span>
    <svg class="note" viewBox="0 0 18 18"><path d="M1 2h15v11h-5l-2 3-2-3H1z" fill="none" stroke="#eee" stroke-width="1.300"/></svg>
  </div>
</div>
</body>
</html>
```

FILE: styles.css
```css
* { box-sizing: border-box; }

body {
  margin: 0;
  height: 100vh;
  display: flex;
  flex-direction: column;
  position: relative;
  overflow: hidden;
  background: #f0f0f0;
  color: #000;
  font: 12px/16px "Open Sans", "Noto Sans CJK SC", sans-serif;
  white-space: nowrap;
}

.defs { position: absolute; width: 0; height: 0; }

button, input, select {
  font: inherit;
  color: inherit;
  margin: 0;
  padding: 0;
  border: 0;
  background: none;
  border-radius: 0;
  white-space: nowrap;
}

ul { list-style: none; margin: 0; padding: 0; }
a { color: inherit; text-decoration: none; }
svg { flex: none; display: block; }
.i { width: 16px; height: 16px; }

/* half-width characters next to the full-width ones */
s {
  text-decoration: none;
  font-family: "DejaVu Sans Mono", monospace;
  font-size: 10px;
}

/* title bar */
.titlebar {
  height: 23px;
  flex: none;
  background: #fff;
  display: flex;
  align-items: center;
  padding-left: 2px;
  gap: 5px;
}
.titlebar h1 {
  margin: 0;
  flex: 1;
  font: 400 12px/16px Inter, "Noto Sans CJK SC", sans-serif;
  color: #999;
}
.winctl { display: flex; }
.winctl button { width: 46px; display: flex; justify-content: center; }
.winctl svg { width: 11px; height: 11px; fill: none; stroke: #888; }

.ime {
  position: absolute;
  left: 714px;
  top: 3px;
  width: 194px;
  height: 24px;
  display: flex;
  align-items: center;
  gap: 6px;
  background: #fff;
  border: 1px solid #b4c8de;
}
.ime .s { width: 28px; height: 28px; margin-left: -14px; }
.ime b { color: #1f73c4; font-size: 15px; }

.ball {
  position: absolute;
  left: 962px;
  top: -30px;
  width: 49px;
  height: 49px;
  border-radius: 50%;
  border: 2px solid #d5e6d8;
  background: #3fc75e;
  box-shadow: 0 1px 5px #8888;
  color: #fff;
  font-weight: 700;
  display: flex;
  justify-content: center;
  align-items: flex-end;
  padding-bottom: 1px;
}

/* menu bar */
.menubar {
  height: 30px;
  flex: none;
  display: flex;
  align-items: center;
  padding-left: 7px;
}
.menus { display: flex; gap: 11px; }
.menubar > .tb { margin-left: 7px; }
.menubar > .chg { margin-left: 16px; }
.notice {
  margin-left: 5px;
  width: 187px;
  padding: 6px 0 6px 29px;
  color: #14696c;
  background: linear-gradient(#fcfcfc, #f2f2f2);
}
.account {
  flex: 1;
  display: flex;
  align-items: center;
  gap: 7px;
  margin-left: 2px;
  padding: 3px 4px;
  background: linear-gradient(#fcfcfc, #f2f2f2);
}

.tb { display: flex; align-items: center; gap: 4px; height: 24px; }
.tb:disabled { color: #7c7c7c; }
.dd {
  width: 5px;
  height: 3px;
  margin-left: -1px;
  background: currentColor;
  clip-path: polygon(0 0, 100% 0, 50% 100%);
}
.dd.wide { margin: 0 1px 0 3px; }
.more { width: 9px; height: 9px; margin: 0 0 10px auto; }
.sep { width: 1px; height: 16px; background: #bdbdbd; }
.sep.dark { height: 24px; background: #999; }

.bar {
  display: flex;
  align-items: center;
  gap: 7px;
  height: 27px;
  padding: 0 4px;
  border-radius: 3px;
  background: linear-gradient(#fcfcfc, #f0f0f0);
}
.bars { display: flex; gap: 3px; flex: none; height: 31px; padding-top: 1px; }
.files { width: 151px; gap: 6px; }
.files .dd.wide { margin-right: 2px; }
.tools { width: 548px; }
.view { flex: 1; padding-left: 0; }
.view .dd.wide { margin-right: 0; }
.view .sep { margin-right: -2px; }
.boxed { border: 1px solid #777; padding: 0 3px 0 2px; margin-right: -3px; }

/* work area */
.work { flex: 1; min-height: 0; display: flex; gap: 5px; }
.nav { width: 166px; display: flex; flex-direction: column; padding-bottom: 1px; }
.navhead {
  height: 15px;
  margin-bottom: 2px;
  display: flex;
  align-items: center;
  gap: 8px;
  padding-right: 4px;
  border: 1px solid #999;
  font-size: 13px;
  line-height: 13px;
}
.navhead span { flex: 1; }
.navhead svg { width: 10px; height: 10px; }
.navbtn {
  height: 22px;
  flex: none;
  margin-right: 1px;
  border: 1px solid #a0a0a0;
  border-top-color: #fff;
  background: #f0f0f0;
}
.expand {
  height: 28px;
  flex: none;
  display: flex;
  align-items: center;
  gap: 5px;
  padding-left: 6px;
  margin: 0 2px;
  background: linear-gradient(#fff, #eee);
  border-top: 2px solid #aaa;
}
.treebox {
  flex: 1;
  min-height: 0;
  display: flex;
  margin: 0 2px 1px 2px;
  padding: 1px 2px 2px 0;
  border: 1px solid #888;
  background: #fff;
}
.tree { flex: 1; overflow: hidden; }
.tree li { display: flex; align-items: center; height: 16px; }
.tree .leaf::before {
  content: "";
  flex: none;
  width: 42px;
  height: 16px;
  background:
    repeating-linear-gradient(90deg, #888 0 1px, #fff 1px 2px) 32px 8px / 10px 1px no-repeat,
    repeating-linear-gradient(#888 0 1px, #fff 1px 2px) 31px 0 / 1px 16px no-repeat,
    repeating-linear-gradient(#888 0 1px, #fff 1px 2px) 12px 0 / 1px 16px no-repeat;
}
.tree .end::before { background-size: 10px 1px, 1px 16px, 0 0; }
.tree .last::before { background-size: 10px 1px, 1px 8px, 1px 16px; }
.tree .end.last::before { background-size: 10px 1px, 1px 8px, 0 0; }
.tree .i { margin-right: 5px; }
.grp { padding-left: 7px; }
.grp .ch { width: 9px; height: 10px; margin-right: 7px; }
.hot { display: flex; align-items: center; height: 16px; background: #d9d9d9; }
.w2 { width: 13px; height: 14px; margin-left: 1px; }

.scroll {
  width: 15px;
  flex: none;
  display: flex;
  flex-direction: column;
  align-items: center;
  background: #f0f0f0;
}
.scroll svg { width: 10px; height: 8px; margin: 5px 0; }
.scroll b { width: 100%; background: #cdcdcd; }
.t1 i { flex: 74; }
.t1 b { flex: 375; }
.t2 i { flex: 308; }
.t2 b { flex: 214; }
.t3 b { flex: 385; }
.t3 i { flex: 144; }

.right { flex: 1; min-width: 0; display: flex; flex-direction: column; }
.combo {
  appearance: none;
  width: 62px;
  height: 22px;
  padding-left: 2px;
  background:
    conic-gradient(from 315deg at 50% 100%, #111 90deg, transparent 0) 53px 10px / 6px 3px no-repeat,
    #fff;
}
.edit .sep { margin: 0 -1px; }
.edit .field { margin: 0 -2px 0 -3px; }
.edit .combo { margin-right: -1px; }

.panes { flex: 1; min-height: 0; display: flex; gap: 5px; }
.parts { width: 184px; display: flex; flex-direction: column; padding: 5px 0 1px; }
.search {
  height: 27px;
  flex: none;
  display: flex;
  align-items: center;
  gap: 5px;
  padding-bottom: 2px;
  background: #fff;
}
.search input {
  width: 158px;
  height: 24px;
  margin-left: 1px;
  padding: 0 2px 3px;
  border: 1px solid #777;
}
.search input::placeholder { color: #777; opacity: 1; }
.listbox {
  flex: 1;
  min-height: 0;
  display: flex;
  padding: 1px 3px 2px 0;
  border: 1px solid #888;
  background: #fff;
}
.list { flex: 1; overflow: hidden; }
.list li, .list span {
  display: flex;
  align-items: center;
  height: 16px;
  font: 10px/16px "DejaVu Sans Mono", monospace;
}
.list li::before {
  content: "";
  width: 42px;
  height: 16px;
  flex: none;
  margin-right: 2px;
  background:
    repeating-linear-gradient(90deg, #888 0 1px, #fff 1px 2px) 32px 8px / 10px 1px no-repeat,
    repeating-linear-gradient(#888 0 1px, #fff 1px 2px) 31px 0 / 1px 16px no-repeat;
}
.list svg { width: 12px; height: 12px; margin-right: 7px; }
.list .sel::before { width: 40px; margin: 0; background-size: 10px 1px, 1px 8px; }
.list .sel span { background: #316ac5; padding: 0 4px; }

.props { flex: 1; min-width: 0; display: flex; flex-direction: column; background: #fff; margin: 1px 3px 2px 0; }
.ptabs { display: flex; }
.ptabs button { height: 21px; padding: 0 7px 0 5px; border-right: 1px solid #ccc; background: #fff; }
.ptabs::after { content: ""; flex: 1; border-bottom: 1px solid #d5d5d5; }
.pbox { flex: 1; min-height: 0; display: flex; margin: 3px 1px 2px 2px; padding: 1px 2px 0 0; border: 1px solid #999; }
.pt { flex: 1; overflow: hidden; }
.pt table { border-collapse: collapse; table-layout: fixed; width: 337px; }
.pt th, .pt td { height: 19px; padding: 0 2px; font-weight: 400; line-height: 16px; text-align: left; border: 1px solid #bdbdbd; border-left: 0; }
.pt thead th { height: 23px; border-top: 0; background: linear-gradient(#fdfdfd, #eee); text-align: center; }
.pt .n { width: 21px; }
.pt .k { width: 191px; }
.pt thead .v { background: linear-gradient(#f9d99a, #f0bd5c); color: #701040; }
.pt tbody th { background: #f5f5f5; text-align: center; padding: 0; }
.pt td:nth-child(2) { padding-left: 20px; }
.pt .cur th { background: #fcd38a; }
.pt .cur td { background: #d9eaf9; }
.pt .cur td:nth-child(2) { background: #0078d7; color: #fff; }
.pt .link td:nth-child(2) { color: #00f; }
.pt .off td { color: #838383; }
.pt .fold td:nth-child(2) { padding-left: 2px; }
.pt .fold button {
  width: 13px;
  height: 13px;
  margin-right: 5px;
  border: 1px solid #aaa;
  color: #000;
  font: 13px/10px "Liberation Mono", monospace;
}

/* section editor window */
.dialog {
  position: absolute;
  left: 658px;
  right: 22px;
  top: 132px;
  bottom: 65px;
  display: flex;
  flex-direction: column;
  padding: 1px 7px 7px;
  border: 1px solid #333;
  background: #b9d0e9;
  box-shadow: inset -1px -1px #45cde8;
}
.dialog h2 {
  flex: none;
  height: 30px;
  margin: 0 -6px;
  padding: 10px 6px 0;
  font-size: 12px;
  font-weight: 400;
  line-height: 16px;
  background: linear-gradient(#9ab4d3, #b7d0ea);
}
.dbody { flex: 1; min-height: 0; display: flex; flex-direction: column; background: #f0f0f0; }
.dtabs { display: flex; align-items: flex-end; height: 21px; flex: none; padding-left: 2px; }
.dtabs button { width: 41px; height: 19px; padding-right: 6px; border: 1px solid #d0d0d0; border-right: 0; background: #f0f0f0; }
.dtabs .on { width: 45px; height: 21px; padding: 0 6px 3px; text-align: left; background: #fff; border: 1px solid #d0d0d0; border-bottom: 0; }
.dtabs i { flex: 1; border-bottom: 1px solid #d0d0d0; }
.pane {
  flex: 1;
  min-height: 0;
  display: flex;
  flex-direction: column;
  margin: 0 2px 3px 0;
  border: solid #fff;
  border-width: 3px 2px 2px 4px;
  box-shadow: 1px 1px #d0d0d0;
}
.drow { display: flex; height: 28px; flex: none; }
.drow .bar { padding: 0 6px 0 7px; height: 28px; }
.drow .combo {
  width: 50px;
  margin-left: -1px;
  margin-right: -3px;
  background-position: 40px 10px, 0 0;
}
.drow .on { margin-left: -5px; }
.drow .on + .tb { margin-left: -2px; }
.drow .field { margin-left: -4px; margin-right: -1px; }
.tb.on { border: 1px solid #0078d7; background: #dfebf5; padding: 0 4px; }
.one .tb.on { gap: 3px; padding: 0 3px; }
.canvas { flex: 1; min-height: 0; margin: 0 0 0 1px; border: 2px solid #f00; background: #14171e; }
.canvas svg { width: 100%; height: 100%; fill: none; }
.grid path { stroke: #3b414b; stroke-dasharray: 11 3 2 3 2 3; shape-rendering: crispEdges; }
.grid .tick { stroke-dasharray: none; }
.grid .lead { stroke: #999; stroke-dasharray: 3 2; }
.box { stroke: #f0f0f0; stroke-width: 5; }
.ref { stroke: #a5c6e8; stroke-dasharray: 3 3; shape-rendering: crispEdges; }
.rebar { stroke: #c9181e; stroke-width: 10; }
.node { stroke: #ffd414; stroke-width: 2; }
.dims { stroke: #7cc367; stroke-width: 2; }
.num { fill: #fff; font: 26px "Liberation Serif", serif; }
.dimt { fill: #343a43; font: 13px "Liberation Serif", serif; }
.snap { display: flex; align-items: center; gap: 3px; height: 28px; flex: none; }
.pair { display: flex; padding-left: 1px; }
.snap .tb.on { padding: 0 3px; }

.dstat { display: flex; gap: 2px; height: 23px; flex: none; background: #fff; }
.dstat span { border: 1px solid #d0d0d0; padding: 2px 4px; background: linear-gradient(#fff, #f0f0f0); }
.xy { width: 98px; }
.dstat .msg { flex: 1; display: flex; justify-content: space-between; padding: 2px 1px; }
.msg svg { width: 12px; height: 12px; align-self: flex-end; }

/* status bar */
.status { height: 22px; flex: none; display: flex; gap: 2px; background: #fff; padding-top: 1px; }
.status span { border: 1px solid #d0d0d0; padding: 2px 1px; background: linear-gradient(#fff, #f0f0f0); }
.c1 { width: 148px; }
.c2 { width: 78px; }
.c3 { width: 98px; }
.c4 { width: 48px; }
.c5 { flex: 1; }
.c6 { width: 71px; }

/* taskbar */
.taskbar { height: 40px; flex: none; display: flex; background: #020d12; color: #eee; }
.start { width: 48px; background: #000; display: flex; align-items: center; justify-content: center; }
.start svg { width: 16px; height: 16px; }
.find { width: 344px; display: flex; align-items: center; background: #333; padding: 0 14px 0 8px; gap: 6px; }
.ring { width: 22px; height: 22px; }
.find input { flex: 1; min-width: 0; font-size: 14px; }
.find input::placeholder { color: #999; opacity: 1; }
.mic { width: 12px; height: 18px; }
.apps { display: flex; align-items: center; flex: 1; }
.apps button { width: 49px; height: 40px; padding: 8px 12px; }
.apps > :nth-child(-n+4) { width: 51px; }
.apps svg { width: 24px; height: 24px; }
.bars2 { width: 4px; height: 16px; margin: 0 8px; border: solid #444; border-width: 0 1px; }
.apps .bars2 { margin: 0 13px 0 4px; }
.white { color: #fff; }
.iex { color: #40a9e8; }
.cyan { color: #119bea; }
.apps .run { border-bottom: 2px solid #76b9ed; }
.apps .act { background: #333f45; }
.tray { display: flex; align-items: center; gap: 8px; padding-right: 24px; }
.tray .bars2 { margin: 0 2px; }
.cpu, .clock { text-align: center; line-height: 17px; }
.cpu { margin: 0 9px 0 10px; }
.clock { line-height: 19px; margin: 0 10px 0 10px; }
.kb { width: 24px; height: 16px; }
.zh { font-size: 13px; padding: 0 4px; }
.note { width: 18px; height: 18px; margin-left: 4px; }
```
